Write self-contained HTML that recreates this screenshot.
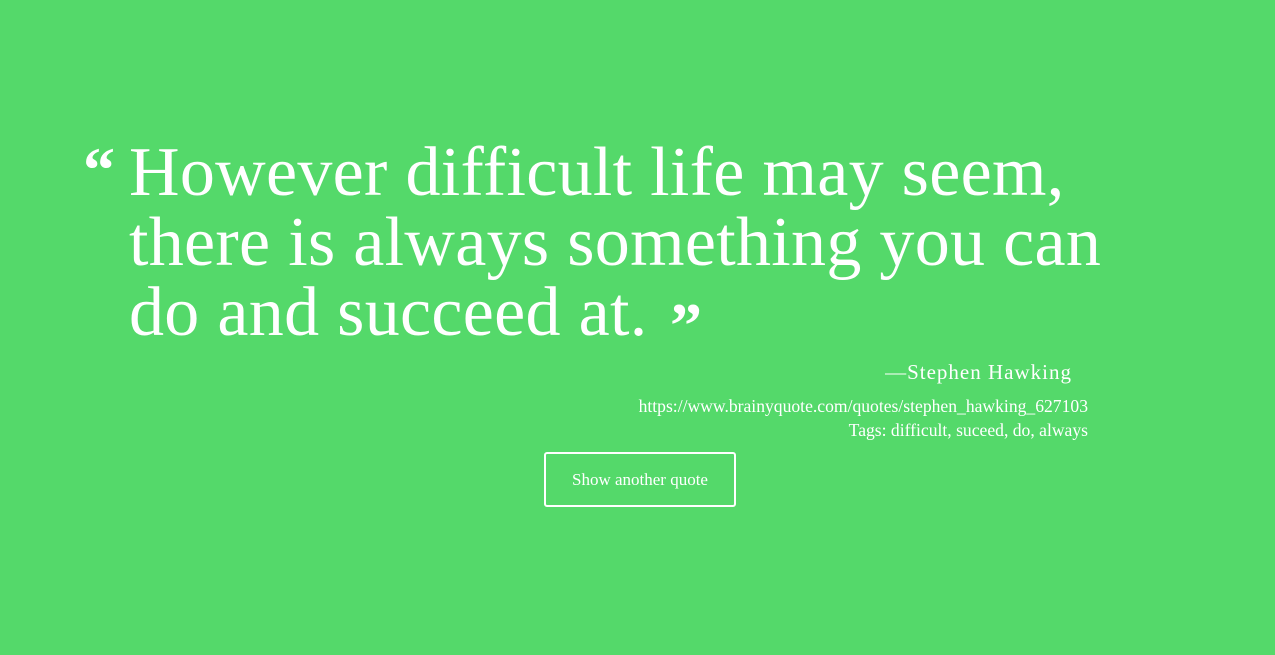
<!DOCTYPE html>
<html><head><meta charset="utf-8"><style>
html,body{margin:0;padding:0;width:1275px;height:655px;background:#54d96a;overflow:hidden;font-family:"Liberation Serif",serif;color:#fff}
.l{position:absolute;left:129px;font-size:70px;line-height:70px;white-space:nowrap;letter-spacing:0.3px}
.q{position:absolute;font-size:64px;font-weight:bold;line-height:60px}
.s{position:absolute;white-space:nowrap}
.btn{position:absolute;left:544px;top:452px;width:188px;height:51px;border:2px solid #fff;border-radius:3px;font-size:17px;text-align:center;line-height:51px}
</style></head><body>
<div class="q" style="left:83px;top:140px">“</div>
<div class="l" style="top:138px">However difficult life may seem,</div>
<div class="l" style="top:208px">there is always something you can</div>
<div class="l" style="top:278px">do and succeed at.</div>
<div class="q" style="left:670px;top:296px">”</div>
<div class="s" style="right:203px;top:360px;font-size:21px;letter-spacing:1px">—Stephen Hawking</div>
<div class="s" style="right:187px;top:396px;font-size:17.6px">https://www.brainyquote.com/quotes/stephen_hawking_627103</div>
<div class="s" style="right:187px;top:420px;font-size:17.6px">Tags: difficult, suceed, do, always</div>
<div class="btn">Show another quote</div>
</body></html>
